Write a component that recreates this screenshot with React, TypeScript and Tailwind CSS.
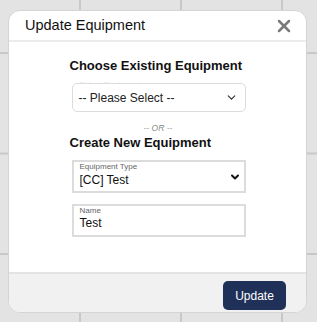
import { ChevronDown, X } from "lucide-react";

export default function App() {
    return (
        <div
            className="w-[317px] h-[322px] overflow-hidden bg-[#e3e3e3] bg-[linear-gradient(to_right,#c8c8c8_2px,transparent_2px),linear-gradient(to_bottom,#c8c8c8_2px,transparent_2px)] bg-[size:101px_100.5px] bg-[position:79px_52px] pt-[10px] pl-[8px]"
            style={{ fontFamily: '"Liberation Sans", Arial, sans-serif' }}
        >
            <div className="w-[299px] h-[303px] bg-white border border-[#d4d4d4] rounded-[12px] overflow-hidden flex flex-col">
                <header className="h-[31px] shrink-0 flex items-center justify-between pl-[16px] pr-[12px] border-b-2 border-[#ececec]">
                    <h1 className="text-[14.5px] text-[#111]">Update Equipment</h1>
                    <X className="w-[20px] h-[20px] text-[#7a7a7a]" strokeWidth={3} />
                </header>

                <main className="flex-1 flex flex-col items-center">
                    <div className="w-[176px] flex flex-col">
                        <h2 className="mt-[16px] text-[13px] leading-[15px] font-bold text-[#111] whitespace-nowrap">
                            Choose Existing Equipment
                        </h2>
                        {/* label mostly hidden behind the select */}
                        <div className="relative mt-[10px] ml-[2px]">
                            <span className="absolute left-[8px] -top-[3px] text-[8px] leading-[9px] text-[#e6e6e6]">Select Equipment</span>
                            <div className="relative h-[29px] w-[174px] bg-white border border-[#dcdcdc] rounded-[5px] flex items-center justify-between pl-[6px] pr-[7px]">
                                <span className="text-[12px] text-[#222]">-- Please Select --</span>
                                <ChevronDown className="w-[13px] h-[13px] text-[#333]" strokeWidth={2.2} />
                            </div>
                        </div>

                        <div className="mt-[11px] ml-[74px] text-[8.5px] leading-[11px] italic text-[#888]">-- OR --</div>
                        <h2 className="mt-[1px] text-[13px] leading-[15px] font-bold text-[#111] whitespace-nowrap">
                            Create New Equipment
                        </h2>

                        <div className="mt-[10px] ml-[2px] w-[174px] h-[33px] border-2 border-[#dcdcdc] pl-[6px] pr-[3px] flex items-center justify-between">
                            <div className="self-start pt-[1px] flex flex-col leading-none">
                                <span className="text-[8px] text-[#666]">Equipment Type</span>
                                <span className="mt-[3px] text-[12px] text-[#111]">[CC] Test</span>
                            </div>
                            <ChevronDown className="w-[12px] h-[12px] text-[#111]" strokeWidth={4} />
                        </div>

                        <div className="mt-[11px] ml-[2px] w-[174px] h-[33px] border-2 border-[#dcdcdc] pl-[6px] pt-[1px] flex flex-col leading-none">
                            <span className="text-[8px] text-[#666]">Name</span>
                            <span className="mt-[2px] text-[12px] text-[#111]">Test</span>
                        </div>
                    </div>
                </main>

                <footer className="h-[40px] shrink-0 bg-[#f1f1f1] border-t-2 border-[#e4e4e4] flex items-start justify-end pt-[7px] pr-[20px]">
                    <button className="h-[29px] w-[63px] rounded-[5px] bg-[#1f3158] text-white text-[12px]">
                        Update
                    </button>
                </footer>
            </div>
        </div>
    );
}
